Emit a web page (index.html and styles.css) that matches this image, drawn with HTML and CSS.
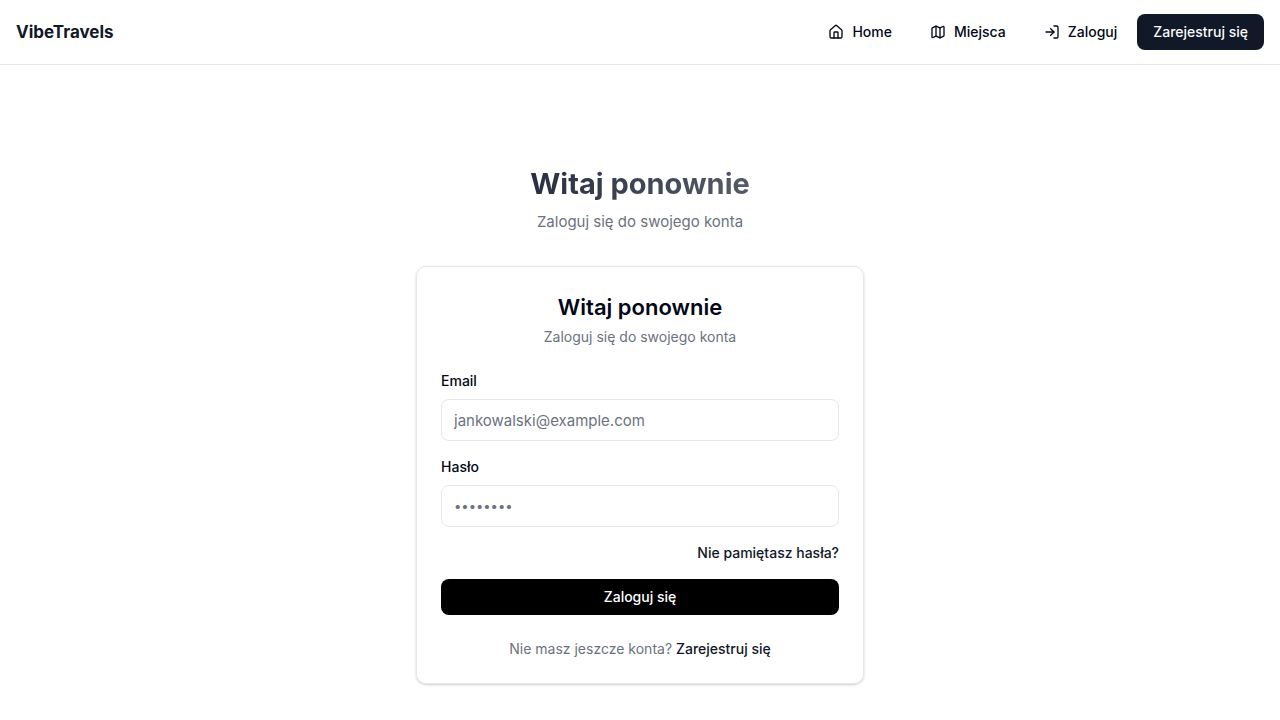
FILE: index.html
```html
<!DOCTYPE html>
<html lang="pl">
<head>
<meta charset="utf-8">
<meta name="viewport" content="width=device-width, initial-scale=1">
<title>VibeTravels</title>
<link rel="stylesheet" href="styles.css">
</head>
<body>
<header class="header">
  <a class="brand" href="#">VibeTravels</a>
  <nav class="nav">
    <a class="nav-link" href="#"><svg class="icon" viewBox="0 0 24 24"><path d="M15 21v-8a1 1 0 0 0-1-1h-4a1 1 0 0 0-1 1v8"/><path d="M3 10a2 2 0 0 1 .709-1.528l7-5.999a2 2 0 0 1 2.582 0l7 5.999A2 2 0 0 1 21 10v9a2 2 0 0 1-2 2H5a2 2 0 0 1-2-2z"/></svg>Home</a>
    <a class="nav-link" href="#"><svg class="icon" viewBox="0 0 24 24"><path d="M14.106 5.553a2 2 0 0 0 1.788 0l3.659-1.83A1 1 0 0 1 21 4.619v12.764a1 1 0 0 1-.553.894l-4.553 2.277a2 2 0 0 1-1.788 0l-4.212-2.106a2 2 0 0 0-1.788 0l-3.659 1.83A1 1 0 0 1 3 19.381V6.618a1 1 0 0 1 .553-.894l4.553-2.277a2 2 0 0 1 1.788 0z"/><path d="M15 5.764v15"/><path d="M9 3.236v15"/></svg>Miejsca</a>
    <div class="nav-account">
      <a class="nav-link" href="#"><svg class="icon" viewBox="0 0 24 24"><path d="M15 3h4a2 2 0 0 1 2 2v14a2 2 0 0 1-2 2h-4"/><path d="m10 17 5-5-5-5"/><path d="M15 12H3"/></svg>Zaloguj</a>
      <a class="nav-link nav-cta" href="#">Zarejestruj się</a>
    </div>
  </nav>
</header>
<main class="main">
  <div class="intro">
    <h1 class="intro-title">Witaj ponownie</h1>
    <p class="intro-text">Zaloguj się do swojego konta</p>
  </div>
  <section class="card">
    <div class="card-head">
      <h2 class="card-title">Witaj ponownie</h2>
      <p class="card-text">Zaloguj się do swojego konta</p>
    </div>
    <form class="form">
      <div class="field">
        <label class="label" for="email">Email</label>
        <input class="input" id="email" type="email" placeholder="jankowalski@example.com">
      </div>
      <div class="field">
        <label class="label" for="password">Hasło</label>
        <input class="input input-password" id="password" type="password" placeholder="••••••••">
      </div>
      <a class="link forgot" href="#">Nie pamiętasz hasła?</a>
      <button class="submit" type="submit">Zaloguj się</button>
    </form>
    <p class="signup">Nie masz jeszcze konta? <a class="link" href="#">Zarejestruj się</a></p>
  </section>
</main>
</body>
</html>
```
FILE: styles.css
```css
*, *::before, *::after { box-sizing: border-box; }
body {
  margin: 0;
  background: #fff;
  color: #020817;
  font-family: Inter, "Liberation Sans", sans-serif;
  font-size: 15px;
  line-height: 24px;
}
h1, h2, p { margin: 0; }
a { color: inherit; text-decoration: none; }
.header {
  display: flex;
  align-items: center;
  justify-content: space-between;
  padding: 14px 16px;
  border-bottom: 1px solid #e5e7eb;
}
.brand {
  color: #111827;
  font-size: 17px;
  font-weight: 700;
  line-height: 28px;
}
.nav { display: flex; gap: 6px; }
.nav-account { display: flex; gap: 4px; }
.nav-link {
  display: inline-flex;
  align-items: center;
  gap: 8px;
  height: 36px;
  padding: 0 16px;
  border-radius: 8px;
  font-size: 14px;
  font-weight: 500;
}
.nav-cta { background: #111827; color: #f8fafc; }
.icon {
  width: 16px;
  height: 16px;
  fill: none;
  stroke: currentColor;
  stroke-width: 2;
  stroke-linecap: round;
  stroke-linejoin: round;
}
.main {
  display: flex;
  flex-direction: column;
  gap: 32px;
  max-width: 448px;
  margin: 0 auto;
  padding: 101px 0 36px;
}
.intro {
  display: flex;
  flex-direction: column;
  gap: 8px;
  text-align: center;
}
.intro-title {
  background: linear-gradient(to right, #111827, #6b7280);
  background-clip: text;
  -webkit-background-clip: text;
  color: transparent;
  font-size: 29px;
  font-weight: 700;
  line-height: 36px;
}
.intro-text { color: #6b7280; }
.card {
  padding: 24px;
  border: 1px solid #e5e7eb;
  border-radius: 10px;
  box-shadow: 0 1px 3px rgba(0, 0, 0, 0.1), 0 1px 2px rgba(0, 0, 0, 0.1);
}
.card-head { text-align: center; }
.card-title {
  font-size: 22px;
  font-weight: 600;
  line-height: 32px;
}
.card-text, .signup {
  color: #6b7280;
  font-size: 14px;
  line-height: 20px;
}
.card-text { margin-top: 4px; }
.form {
  display: flex;
  flex-direction: column;
  gap: 16px;
  margin-top: 24px;
}
.field { display: flex; flex-direction: column; gap: 8px; }
.label { font-size: 14px; font-weight: 500; line-height: 20px; }
.input {
  width: 100%;
  height: 42px;
  padding: 8px 12px;
  border: 1px solid #e5e7eb;
  border-radius: 8px;
  background: #fff;
  color: inherit;
  font: inherit;
}
.input-password { font-size: 13px; }
.input::placeholder { color: #6b7280; opacity: 1; }
.link { color: #111827; font-size: 14px; font-weight: 500; line-height: 20px; }
.forgot { align-self: flex-end; }
.submit {
  height: 36px;
  border: 0;
  border-radius: 8px;
  background: #000;
  color: #fff;
  font: inherit;
  font-size: 14px;
  font-weight: 500;
  cursor: pointer;
}
.signup { margin-top: 24px; text-align: center; }
```
